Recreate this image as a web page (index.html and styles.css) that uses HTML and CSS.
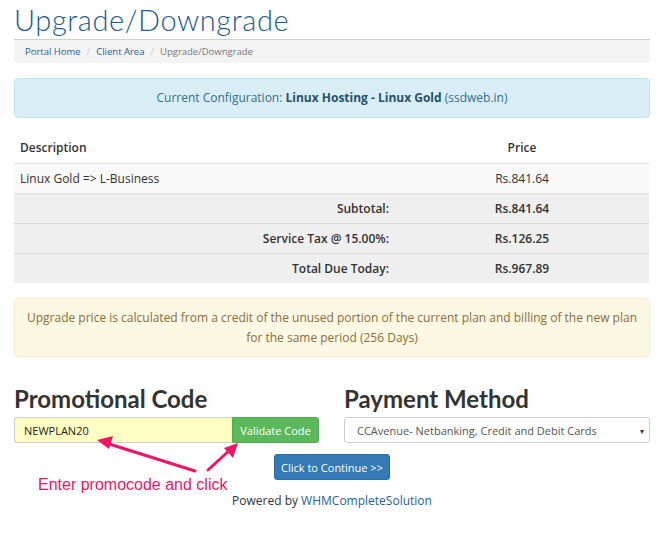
FILE: index.html
```html
<!DOCTYPE html>
<html lang="en">
<head>
    <meta charset="UTF-8">
    <meta name="viewport" content="width=device-width, initial-scale=1.0">
    <title>Upgrade/Downgrade</title>
    <link rel="stylesheet" href="styles.css">
</head>
<body>
    <div class="container">
        <h1 class="page-title">Upgrade/Downgrade</h1>
        <ol class="breadcrumb">
            <li><a href="#">Portal Home</a></li>
            <li><a href="#">Client Area</a></li>
            <li class="active">Upgrade/Downgrade</li>
        </ol>

        <div class="alert alert-info">
            Current Configuration: <strong>Linux Hosting - Linux Gold</strong> (ssdweb.in)
        </div>

        <table class="table">
            <thead>
                <tr>
                    <th class="col-desc">Description</th>
                    <th class="col-price">Price</th>
                </tr>
            </thead>
            <tbody>
                <tr class="item">
                    <td>Linux Gold =&gt; L-Business</td>
                    <td class="col-price">Rs.841.64</td>
                </tr>
                <tr class="total">
                    <td class="label">Subtotal:</td>
                    <td class="col-price">Rs.841.64</td>
                </tr>
                <tr class="total">
                    <td class="label">Service Tax @ 15.00%:</td>
                    <td class="col-price">Rs.126.25</td>
                </tr>
                <tr class="total">
                    <td class="label">Total Due Today:</td>
                    <td class="col-price">Rs.967.89</td>
                </tr>
            </tbody>
        </table>

        <div class="alert alert-warning">
            Upgrade price is calculated from a credit of the unused portion of the current plan and billing of the new plan for the same period (256 Days)
        </div>

        <div class="checkout">
            <div class="col">
                <h2>Promotional Code</h2>
                <div class="input-group">
                    <input type="text" class="promo-input" value="NEWPLAN20">
                    <button class="btn btn-success">Validate Code</button>
                </div>
            </div>
            <div class="col">
                <h2>Payment Method</h2>
                <div class="select">
                    <span>CCAvenue- Netbanking, Credit and Debit Cards</span>
                    <span class="caret">&#9662;</span>
                </div>
            </div>
        </div>

        <div class="actions">
            <button class="btn btn-primary">Click to Continue &gt;&gt;</button>
        </div>

        <p class="powered">Powered by <a href="#">WHMCompleteSolution</a></p>

        <!-- annotation drawn over the screenshot -->
        <svg class="annotation-arrows" width="668" height="552" viewBox="0 0 668 552">
            <g stroke="#ee1466" stroke-width="3" stroke-linecap="round" fill="none">
                <line x1="195" y1="468" x2="106" y2="440"/>
                <line x1="208" y1="467" x2="231" y2="446"/>
            </g>
            <g fill="#ee1466">
                <polygon points="97,437 113,433 109,446"/>
                <polygon points="238,440 233,455 224,445"/>
            </g>
        </svg>
        <div class="annotation-text">Enter promocode and click</div>
    </div>
</body>
</html>
```

FILE: styles.css
```css
body {
    font-family: "Open Sans", "DejaVu Sans", sans-serif;
    font-size: 12px;
    color: #333;
    background: #fff;
    margin: 0;
}

a {
    color: #23629a;
    text-decoration: none;
}

.container {
    position: relative;
    width: 636px;
    padding: 0 18px 0 14px;
}

.page-title {
    font-family: Lato, "Open Sans", sans-serif;
    font-weight: 300;
    font-size: 29px;
    letter-spacing: 0.6px;
    line-height: 34px;
    color: #195d8f;
    margin: 3px 0 2px 0;
}

.breadcrumb {
    list-style: none;
    margin: 0;
    padding: 0 11px;
    height: 23px;
    display: flex;
    align-items: center;
    background: #f4f4f4;
    border-top: 1px solid #cfcfcf;
    border-radius: 0 0 3px 3px;
    font-size: 9.5px;
}

.breadcrumb li + li::before {
    content: "/";
    color: #ccc;
    padding: 0 6px;
}

.breadcrumb .active {
    color: #777;
}

.alert {
    border: 1px solid transparent;
    border-radius: 4px;
    text-align: center;
    font-size: 12px;
}

.alert-info {
    margin-top: 15px;
    padding: 10px 15px;
    line-height: 18px;
    background: #d9edf7;
    border-color: #bce8f1;
    color: #31708f;
}

.alert-info strong {
    color: #245269;
}

.table {
    width: 635px;
    margin-top: 15px;
    border-collapse: collapse;
}

.table th,
.table td {
    padding: 0 6px;
    height: 29px;
    line-height: 18px;
    text-align: left;
}

.table th {
    font-weight: 600;
    height: 30px;
}

.table td {
    border-top: 1px solid #ddd;
}

.table thead th {
    border-bottom: 1px solid #ddd;
}

.col-desc {
    width: 369px;
}

.table .col-price {
    text-align: center;
}

.item td {
    background: #f9f9f9;
}

.total td {
    background: #efefef;
    font-weight: 600;
}

.table .label {
    text-align: right;
}

.alert-warning {
    margin-top: 15px;
    padding: 9px 10px 8px;
    line-height: 20px;
    background: #fcf8e3;
    border-color: #faebcc;
    color: #8a6d3b;
}

.checkout {
    display: grid;
    grid-template-columns: 1fr 1fr;
    gap: 24px;
    margin-top: 28px;
}

.checkout h2 {
    font-family: Lato, "Open Sans", sans-serif;
    font-weight: 700;
    font-size: 24px;
    line-height: 28px;
    margin: 0 0 4px 0;
    color: #333;
}

.input-group {
    display: flex;
    height: 26px;
}

.promo-input {
    width: 218px;
    box-sizing: border-box;
    border: 1px solid #ccc;
    border-right: none;
    border-radius: 3px 0 0 3px;
    background: #ffffc4;
    padding: 0 9px;
    font-family: "Open Sans", sans-serif;
    font-size: 11px;
    color: #222;
}

.btn {
    font-family: "Open Sans", sans-serif;
    font-size: 11px;
    color: #fff;
    border: 1px solid transparent;
    white-space: nowrap;
    cursor: pointer;
}

.btn-success {
    width: 87px;
    background: #5cb85c;
    border-color: #4cae4c;
    border-radius: 0 3px 3px 0;
    padding: 0;
}

.select {
    display: flex;
    justify-content: space-between;
    align-items: center;
    height: 26px;
    box-sizing: border-box;
    border: 1px solid #ccc;
    border-radius: 3px;
    padding: 0 5px 0 12px;
    font-size: 11px;
    color: #555;
}

.caret {
    font-size: 8px;
    color: #333;
}

.actions {
    text-align: center;
    margin-top: 11px;
}

.btn-primary {
    background: #337ab7;
    border-color: #2e6da4;
    border-radius: 3px;
    height: 26px;
    padding: 0 6px;
}

.powered {
    text-align: center;
    margin: 12px 0 0 0;
    font-size: 12px;
}

.annotation-arrows {
    position: absolute;
    left: 0;
    top: 0;
    pointer-events: none;
}

.annotation-text {
    position: absolute;
    left: 38px;
    top: 473px;
    font-family: "Liberation Sans", Arial, sans-serif;
    font-size: 16px;
    color: #ee1466;
}
```
